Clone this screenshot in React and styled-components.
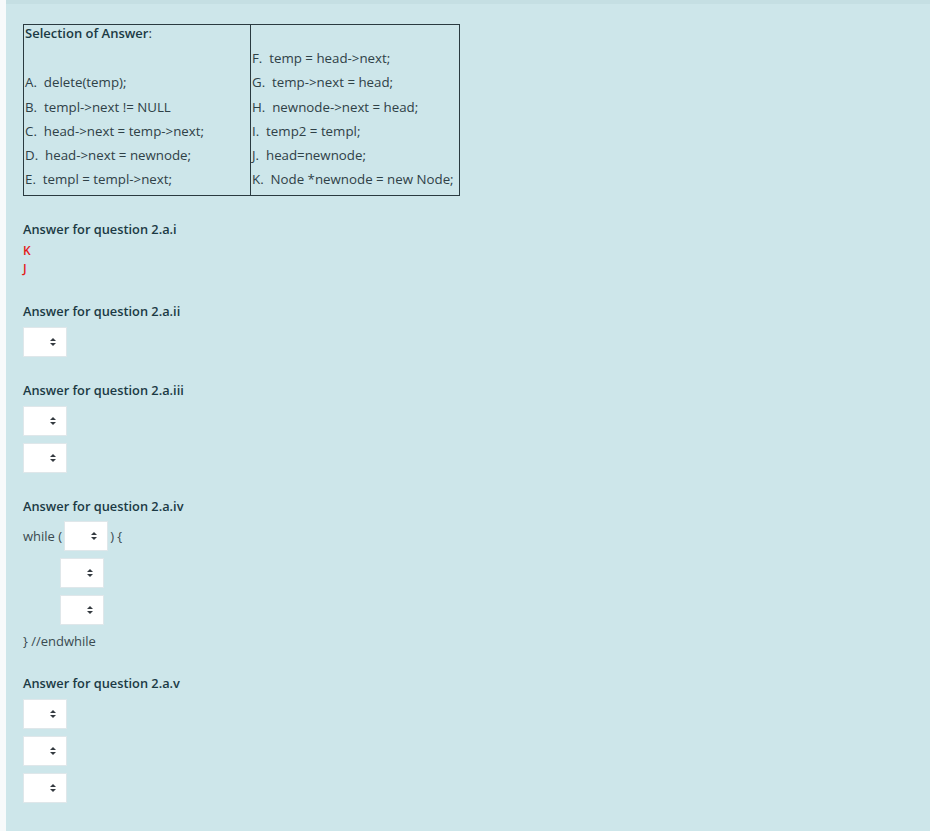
import React from 'react';
import styled, { createGlobalStyle } from 'styled-components';

const GlobalStyle = createGlobalStyle`
  html, body {
    margin: 0;
    padding: 0;
    background: #f7fafb;
  }
  body {
    font-family: "Open Sans", "Liberation Sans", sans-serif;
    font-size: 13px;
    color: #34454b;
    font-variant-ligatures: none;
    font-feature-settings: "calt" 0, "liga" 0;
  }
`;

const Page = styled.div`
  min-height: 831px;
  padding-left: 6px;
  box-sizing: border-box;
`;

const Panel = styled.div`
  min-height: 831px;
  box-sizing: border-box;
  background: #cde6ea;
  border-top: 4px solid #c5dfe3;
  padding: 20px 0 24px 17px;
  display: flex;
  flex-direction: column;
`;

const ChoiceTable = styled.table`
  border-collapse: collapse;
  border: 1px solid #2a3a40;
  width: 437px;
  margin-bottom: 23px;
  color: #2f4147;
  font-size: 13.3px;
`;

const Cell = styled.td`
  padding: 0 1px;
  vertical-align: top;
  white-space: pre;
  width: ${p => (p.$left ? '224px' : 'auto')};
  border-right: ${p => (p.$left ? '1px solid #2a3a40' : 'none')};
  height: ${p => (p.$head ? '21px' : '24.3px')};
  line-height: ${p => (p.$head ? '17px' : '24.3px')};
  padding-bottom: ${p => (p.$last ? '3px' : '0')};
`;

const TableTitle = styled.span`
  font-weight: 600;
  font-size: 13px;
  color: #1b3a44;
`;

const Block = styled.div`
  display: flex;
  flex-direction: column;
  align-items: flex-start;
  gap: 7px;
  margin-bottom: 23px;
`;

const Heading = styled.div`
  font-weight: 600;
  font-size: 12.8px;
  color: #1b3a44;
  line-height: 20px;
  margin-bottom: ${p => (p.$tight ? '-2px' : '-1px')};
`;

const RedList = styled.div`
  display: flex;
  flex-direction: column;
  color: #e31a1a;
  font-weight: 600;
  font-size: 12px;
  line-height: 18px;
  margin-top: -2px;
`;

const CodeLine = styled.div`
  display: flex;
  align-items: center;
  gap: 2px;
  line-height: 18px;
  color: #3a4a50;
  padding-left: ${p => p.$indent || 0}px;
`;

const SelectWrap = styled.div`
  position: relative;
  width: 44px;
  height: 30px;
  flex: none;
`;

const NativeSelect = styled.select`
  appearance: none;
  -webkit-appearance: none;
  width: 100%;
  height: 100%;
  box-sizing: border-box;
  margin: 0;
  background: #fff;
  border: 1px solid #dfe7ea;
  border-radius: 0;
  font: inherit;
  outline: none;
`;

const Caret = styled.svg`
  position: absolute;
  right: 10px;
  top: 10px;
  pointer-events: none;
`;

const Select = () => (
  <SelectWrap>
    <NativeSelect defaultValue="">
      <option value="" />
    </NativeSelect>
    <Caret width="8" height="10" viewBox="0 0 8 10">
      <path d="M4 1 L7 4 H1 Z" fill="#343a40" />
      <path d="M4 9 L7 6 H1 Z" fill="#343a40" />
    </Caret>
  </SelectWrap>
);

const rows = [
  ['', 'F.  temp = head->next;'],
  ['A.  delete(temp);', 'G.  temp->next = head;'],
  ['B.  templ->next != NULL', 'H.  newnode->next = head;'],
  ['C.  head->next = temp->next;', 'I.  temp2 = templ;'],
  ['D.  head->next = newnode;', 'J.  head=newnode;'],
  ['E.  templ = templ->next;', 'K.  Node *newnode = new Node;'],
];

const App = () => (
  <>
    <GlobalStyle />
    <Page>
      <Panel>
        <ChoiceTable>
          <tbody>
            <tr>
              <Cell $left $head>
                <TableTitle>Selection of Answer</TableTitle>:
              </Cell>
              <Cell $head />
            </tr>
            {rows.map(([a, b], i) => (
              <tr key={i}>
                <Cell $left $last={i === rows.length - 1}>{a}</Cell>
                <Cell $last={i === rows.length - 1}>{b}</Cell>
              </tr>
            ))}
          </tbody>
        </ChoiceTable>

        <Block>
          <Heading $tight>Answer for question 2.a.i</Heading>
          <RedList>
            <span>K</span>
            <span>J</span>
          </RedList>
        </Block>

        <Block>
          <Heading>Answer for question 2.a.ii</Heading>
          <Select />
        </Block>

        <Block>
          <Heading>Answer for question 2.a.iii</Heading>
          <Select />
          <Select />
        </Block>

        <Block>
          <Heading $tight>Answer for question 2.a.iv</Heading>
          <CodeLine>
            <span>while (</span>
            <Select />
            <span>) {'{'}</span>
          </CodeLine>
          <CodeLine $indent={37}><Select /></CodeLine>
          <CodeLine $indent={37}><Select /></CodeLine>
          <CodeLine>{'} //endwhile'}</CodeLine>
        </Block>

        <Block>
          <Heading>Answer for question 2.a.v</Heading>
          <Select />
          <Select />
          <Select />
        </Block>
      </Panel>
    </Page>
  </>
);

export default App;
